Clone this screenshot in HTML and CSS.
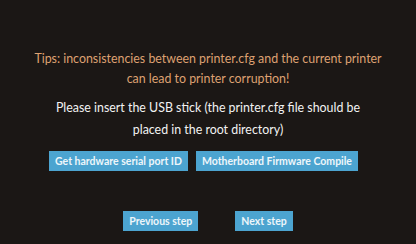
FILE: index.html
```html
<!DOCTYPE html>
<html lang="en">
<head>
    <meta charset="UTF-8">
    <title>Printer Config</title>
    <link rel="stylesheet" href="styles.css">
</head>
<body>

<div class="screen">
    <p class="tips">Tips: inconsistencies between printer.cfg and the current printer<br>can lead to printer corruption!</p>
    <p class="notice">Please insert the USB stick (the printer.cfg file should be<br>placed in the root directory)</p>

    <div class="actions">
        <button class="btn">Get hardware serial port ID</button>
        <button class="btn">Motherboard Firmware Compile</button>
    </div>

    <div class="steps">
        <button class="btn">Previous step</button>
        <button class="btn">Next step</button>
    </div>
</div>

</body>
</html>
```

FILE: styles.css
```css
body {
    margin: 0;
    padding: 0;
    background-color: #1b1715;
    font-family: Lato, "Noto Sans", sans-serif;
}

.screen {
    width: 416px;
    height: 244px;
    display: flex;
    flex-direction: column;
    align-items: center;
    padding-top: 49px;
    box-sizing: border-box;
}

.tips {
    margin: 0;
    color: #dea172;
    font-size: 12.4px;
    line-height: 20px;
    text-align: center;
}

.notice {
    margin: 8px 0 0;
    color: #f2f2f2;
    font-size: 12.4px;
    line-height: 22px;
    text-align: center;
}

.actions {
    display: flex;
    gap: 8px;
    margin-top: 10px;
    margin-right: 9px;
}

.steps {
    display: flex;
    gap: 37px;
    margin-top: 40px;
}

.btn {
    height: 20px;
    padding: 0 6px;
    border: none;
    background-color: #4ca4d0;
    color: #eef6fa;
    font-family: inherit;
    font-size: 10.5px;
    font-weight: 700;
    cursor: pointer;
}
```
